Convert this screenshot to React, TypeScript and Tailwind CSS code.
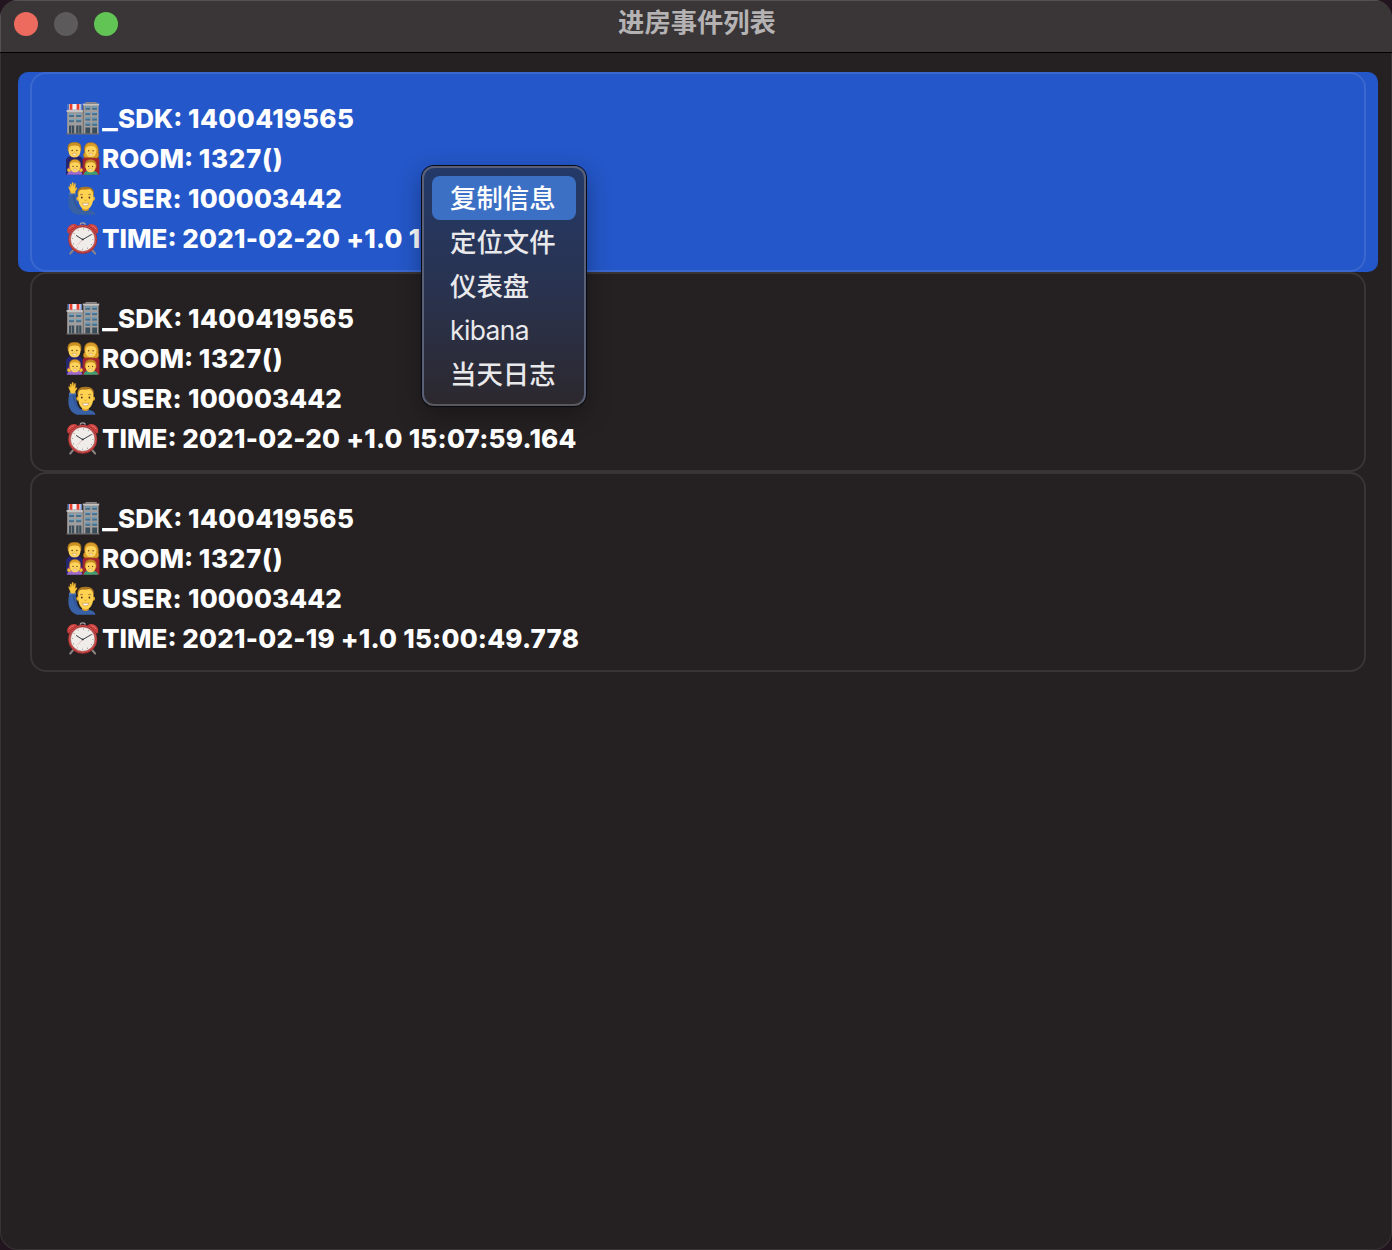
import type { ReactNode } from "react";

function Building() {
  return (
    <svg viewBox="0 0 34 34" className="h-[34px] w-[34px]">
      <rect x="1.2" y="8.6" width="17" height="23.4" fill="#a09d9c" />
      <rect x="0.6" y="8" width="17.6" height="2" fill="#c6c2c1" />
      <rect x="17.2" y="2.2" width="15.4" height="29.8" fill="#a09d9c" />
      <rect x="16.8" y="1.6" width="16.4" height="1.8" fill="#c6c2c0" />
      <rect x="19.4" y="0" width="11.4" height="1.8" fill="#8a8685" />
      <rect x="16.8" y="3.4" width="1.2" height="28.6" fill="#777473" />
      {[4.6, 10, 15.4, 20.6].map((y) => (
        <g key={y}>
          {[19.4, 26.2].map((x) => (
            <g key={x}>
              <rect x={x} y={y} width="4.8" height="3.2" fill="#456f8a" />
              <rect x={x} y={y} width="4.8" height="1.2" fill="#78a6c0" />
            </g>
          ))}
        </g>
      ))}
      {[11.8, 17].map((y) => (
        <g key={y}>
          {[3, 10.2].map((x) => (
            <g key={x}>
              <rect x={x} y={y} width="5" height="3.2" fill="#456f8a" />
              <rect x={x} y={y} width="5" height="1.2" fill="#78a6c0" />
            </g>
          ))}
        </g>
      ))}
      <path d="M3 23.4h5.2V32H3zM10.2 23.4h5.2V32h-5.2zM19.4 25.4h4.8V32h-4.8zM26.2 25.4H31V32h-4.8z" fill="#3a4d5a" />
      <path d="M5.2 23.4h.8V32h-.8zM12.4 23.4h.8V32h-.8z" fill="#8e8d8e" />
      <path d="M0.4 31.2h33v1.3H.4z" fill="#6e6c6d" />
      <rect x="1.8" y="2" width="14" height="5.8" rx=".6" fill="#eef0f6" />
      <path d="M3.6 2h2.8v5.8H3.6zM10.6 2h2.8v5.8h-2.8z" fill="#e8402f" />
      <path d="M1.8 2h1.2v5.8H1.8zM14.6 2h1.2v5.8h-1.2z" fill="#4573bd" />
    </svg>
  );
}

function Face({ x, y, s, hair }: { x: number; y: number; s: number; hair: ReactNode }) {
  return (
    <g transform={`translate(${x} ${y}) scale(${s})`}>
      {hair}
      <path d="M-5.2-1C-4.6-3.2-3-3.8 0-4S4.6-3.2 5.2-1C5.8 3.6 3.6 6.6 0 6.6S-5.8 3.6-5.2-1Z" fill="#ffd45c" />
      <circle cx="-2.1" cy=".5" r=".65" fill="#573520" />
      <circle cx="2.1" cy=".5" r=".65" fill="#573520" />
      <path d="M-2 3.1q2 .6 4 0Q1.5 4.8 0 4.8T-2 3.1Z" fill="#fff" stroke="#b97c2e" strokeWidth=".35" />
      <path d="M-.5 1.9h1" stroke="#d9a02e" strokeWidth=".6" />
    </g>
  );
}

function Family() {
  return (
    <svg viewBox="0 0 34 34" className="h-[34px] w-[34px]">
      <path d="M0 32.8V18q1-3.6 5-4h7q5 .8 5 5v13.8z" fill="#25246f" />
      <path d="M16.6 32.8V19q.2-4.2 5-5h7q3.6.6 4.8 4v14.8z" fill="#a3242c" />
      <Face x={8.5} y={8} s={1.12} hair={<path d="M-5.6 1C-6.8-4-5-7.2 0-7 5.4-7.2 6.6-4 5.6 1z" fill="#c99024" stroke="#95621d" strokeWidth=".5" />} />
      <Face x={24.9} y={8.2} s={1.04} hair={<path d="M-6 2C-7.4-5-3.6-7.6 0-7.3 6-7.6 7.6-2 7.2 2.2 8.6 6.6 6.4 8 4 7.4L-4 7.2C-7 8-8.4 5-6 2Z" fill="#d99c28" stroke="#9c671f" strokeWidth=".5" />} />
      <path d="M1 32.8q.8-4 5.3-4h5.4q4.4.4 4.8 4z" fill="#a06acb" />
      <path d="M17.6 32.8q.8-4 5.3-4h3.8q5 .4 5.4 4z" fill="#3d9d77" />
      <Face x={9} y={24} s={0.96} hair={<><circle cx="-6.2" cy="4.2" r="2" fill="#f2bf2c" /><circle cx="6.2" cy="4.2" r="2" fill="#f2bf2c" /><path d="M-5.8 2C-6.6-5-4-6.8 0-6.8S6.6-5 5.8 2z" fill="#dca12b" stroke="#a87422" strokeWidth=".4" /><circle cx="-6" cy="2" r=".9" fill="#de4b96" /><circle cx="6" cy="2" r=".9" fill="#de4b96" /></>} />
      <Face x={24.6} y={24} s={0.96} hair={<path d="M-5.8 2C-6.8-3-5.2-7 0-6.8 5.4-7 6.8-3 5.8 2z" fill="#c58a28" stroke="#956020" strokeWidth=".4" />} />
    </svg>
  );
}

function RaisingHand() {
  return (
    <svg viewBox="0 0 34 34" className="h-[34px] w-[34px]">
      <path d="M3.4 10.8C2 17 1.8 23 4 27q2 4.2 7 5.7h18.6c-.8-3.2-3-4.2-6.6-4.8l-8.4-1C11.2 25 9.6 18 9.8 11z" fill="#3861a5" />
      <path d="M7.6 12c.2 8 1.8 12.5 7 15.6" fill="none" stroke="#27498b" strokeWidth=".8" />
      <path d="M3.2 10.8q3.2-1.6 6.8 0l-.1 1.8q-3.2-1-6.8.2z" fill="#537dbd" />
      <path d="M4.6 11C4.4 8.8 2.6 6.6 2.6 4.8c.5-.8 1.2.2 1.7 1L4 2.5c0-1 1.2-1 1.4-.1l.3 2L6 .8c.1-.9 1.4-.9 1.4.1l.1 3.4 1-2.5c.4-.8 1.4-.4 1.2.5L9.2 6.4l1-.6c1-.4 1.3.3.7 1L9.2 9.6V11q-2.4.8-4.6 0z" fill="#fac73d" stroke="#d99a23" strokeWidth=".3" />
      <path d="M16 25h6.8v2.8q-3.4 2.4-6.8 0z" fill="#d99a20" />
      <path d="M11.8 14C10.4 8 13 4.6 19.6 4.8 26.6 4.6 29 8.6 27.6 14z" fill="#a87523" />
      <ellipse cx="11.7" cy="16.6" rx="1.3" ry="2.2" fill="#efaf2a" />
      <ellipse cx="27.6" cy="16.6" rx="1.3" ry="2.2" fill="#efaf2a" />
      <path d="M12.2 13C12.4 9.2 13.8 7.8 16.4 7.6c3.4.2 5.4-.2 7.4-.6 2.2 1 3.2 3 3.4 6 .6 8.4-2.4 14.2-7.5 14.2S11.6 21.4 12.2 13Z" fill="#ffd250" />
      <path d="M14 12.8q1.5-1 3 0M22.2 12.8q1.5-1 3 0" fill="none" stroke="#976527" strokeWidth=".8" />
      <ellipse cx="15.8" cy="15.6" rx=".9" ry="1.1" fill="#533820" />
      <ellipse cx="23.4" cy="15.6" rx=".9" ry="1.1" fill="#533820" />
      <path d="M18.5 18q1.1.8 2.2 0" fill="none" stroke="#cc8e22" strokeWidth=".7" />
      <path d="M16.2 21q3.4.9 6.8 0-.7 2.8-3.4 2.8T16.2 21Z" fill="#fff" stroke="#b0702a" strokeWidth=".45" />
    </svg>
  );
}

function Alarm() {
  return (
    <svg viewBox="0 0 34 34" className="h-[34px] w-[34px]">
      <path d="m8 27-3.8 4.6M25.4 27l3.8 4.6" stroke="#8d8583" strokeWidth="2" strokeLinecap="round" />
      <path d="M14.3 2.8q0-1.9 2.4-1.9t2.4 1.9" fill="none" stroke="#aaa3a0" strokeWidth="1.3" />
      <path d="M1.6 10.7C-.2 6 4.7.6 10.4 2.5c1.3.4 1.2 1.3.3 2L3.4 11c-.7.6-1.4.7-1.8-.3ZM31.8 10.7C33.6 6 28.7.6 23 2.5c-1.3.4-1.2 1.3-.3 2L30 11c.7.6 1.4.7 1.8-.3Z" fill="#c93f3d" />
      <path d="M3.1 7.2Q4.7 4 8 3.7M30.2 7.2Q28.7 4 25.4 3.7" fill="none" stroke="#e5746e" strokeWidth="1" />
      <circle cx="16.7" cy="17.2" r="14.5" fill="#a93033" />
      <circle cx="16.7" cy="16.9" r="13.3" fill="none" stroke="#cf5652" strokeWidth="1" />
      <circle cx="16.7" cy="17.2" r="12.2" fill="#efecea" stroke="#a5423f" strokeWidth=".5" />
      <circle cx="16.7" cy="17.2" r="10.2" fill="none" stroke="#77716f" strokeWidth="1.2" strokeDasharray=".6 4.741" />
      <path d="m10.4 13.6 6.3 4 8.6-5" fill="none" stroke="#3c3f42" strokeWidth="1" strokeLinecap="round" strokeLinejoin="round" />
      <path d="m16.7 17.6-6 6" stroke="#d38b84" strokeWidth=".5" />
      <circle cx="16.7" cy="17.4" r=".9" fill="#292b2c" />
    </svg>
  );
}

const events = [
  { sdk: "1400419565", room: "1327()", user: "100003442", time: "2021-02-20 +1.0 15:07:59.164" },
  { sdk: "1400419565", room: "1327()", user: "100003442", time: "2021-02-20 +1.0 15:07:59.164" },
  { sdk: "1400419565", room: "1327()", user: "100003442", time: "2021-02-19 +1.0 15:00:49.778" },
];

const menuItems = ["复制信息", "定位文件", "仪表盘", "kibana", "当天日志"];

function Row({ icon, children }: { icon: ReactNode; children: ReactNode }) {
  return (
    <div className="flex h-10 items-center whitespace-pre">
      <span className="mt-[2px] mr-[2px] shrink-0">{icon}</span>
      <span className="pt-[2px]">{children}</span>
    </div>
  );
}

export default function App() {
  return (
    <div className="h-[1250px] w-[1392px] overflow-hidden bg-[#23151f]">
      <div className="relative flex h-full flex-col overflow-hidden rounded-[18px] bg-[#252123] font-['Inter','Noto_Sans_CJK_SC',sans-serif] shadow-[inset_0_0_0_1px_#373335]">
        <header className="grid h-[53px] shrink-0 grid-cols-[1fr_auto_1fr] items-center border-b border-black bg-[#3a3637] pb-1 shadow-[inset_1px_1px_0_#555152]">
          <div className="flex gap-4 pl-[14px]">
            <span className="h-6 w-6 rounded-full bg-[#ed6a5e]" />
            <span className="h-6 w-6 rounded-full bg-[#5d5a5b]" />
            <span className="h-6 w-6 rounded-full bg-[#61c454]" />
          </div>
          <h1 className="pb-0.5 pl-[2px] text-[26.3px] leading-none font-bold text-[#b4b2b3]">进房事件列表</h1>
        </header>
        <main className="pt-[19px] pr-[14px] pl-[18px]">
          {events.map((e, i) => (
            <div key={i} className={i === 0 ? "rounded-[10px] bg-[#2457c9] px-3" : "px-3"}>
              <article
                className={`h-[200px] rounded-2xl border-2 pt-6 pl-[34px] text-[26px] leading-10 font-extrabold text-white ${
                  i === 0 ? "border-[#3a68ce]" : "border-[#393537]"
                }`}
              >
                <Row icon={<Building />}>
                  <span className="inline-block w-4 origin-left scale-x-125">_</span>SDK: <span className="tracking-[0.45px]">{e.sdk}</span>
                </Row>
                <Row icon={<Family />}>
                  ROOM: <span className="tracking-[0.7px]">{e.room}</span>
                </Row>
                <Row icon={<RaisingHand />}>
                  <span className="tracking-[0.35px]">USER: </span>
                  <span className="tracking-[0.1px]">{e.user}</span>
                </Row>
                <Row icon={<Alarm />}>
                  TIME: <span className="tracking-[0.22px]">{e.time}</span>
                </Row>
              </article>
            </div>
          ))}
        </main>
        <ul className="absolute top-[166px] left-[422px] h-[240px] w-[164px] rounded-xl border-2 border-[#596078] border-b-[#59575c] bg-linear-to-b from-[#233969] via-[#293350] to-[#2c282e] p-2 text-[26.4px] text-[#e9e9ec] shadow-[0_0_0_1px_#080a12,0_8px_24px_rgba(0,0,0,0.35)]">
          {menuItems.map((m, i) => (
            <li
              key={m}
              className={`flex h-11 items-center rounded-lg pl-[18px] leading-none ${i === 0 ? "bg-[#3b70c5] text-white" : ""} ${m === "kibana" ? "tracking-[-0.6px]" : "font-medium"}`}
            >
              {m}
            </li>
          ))}
        </ul>
      </div>
    </div>
  );
}
